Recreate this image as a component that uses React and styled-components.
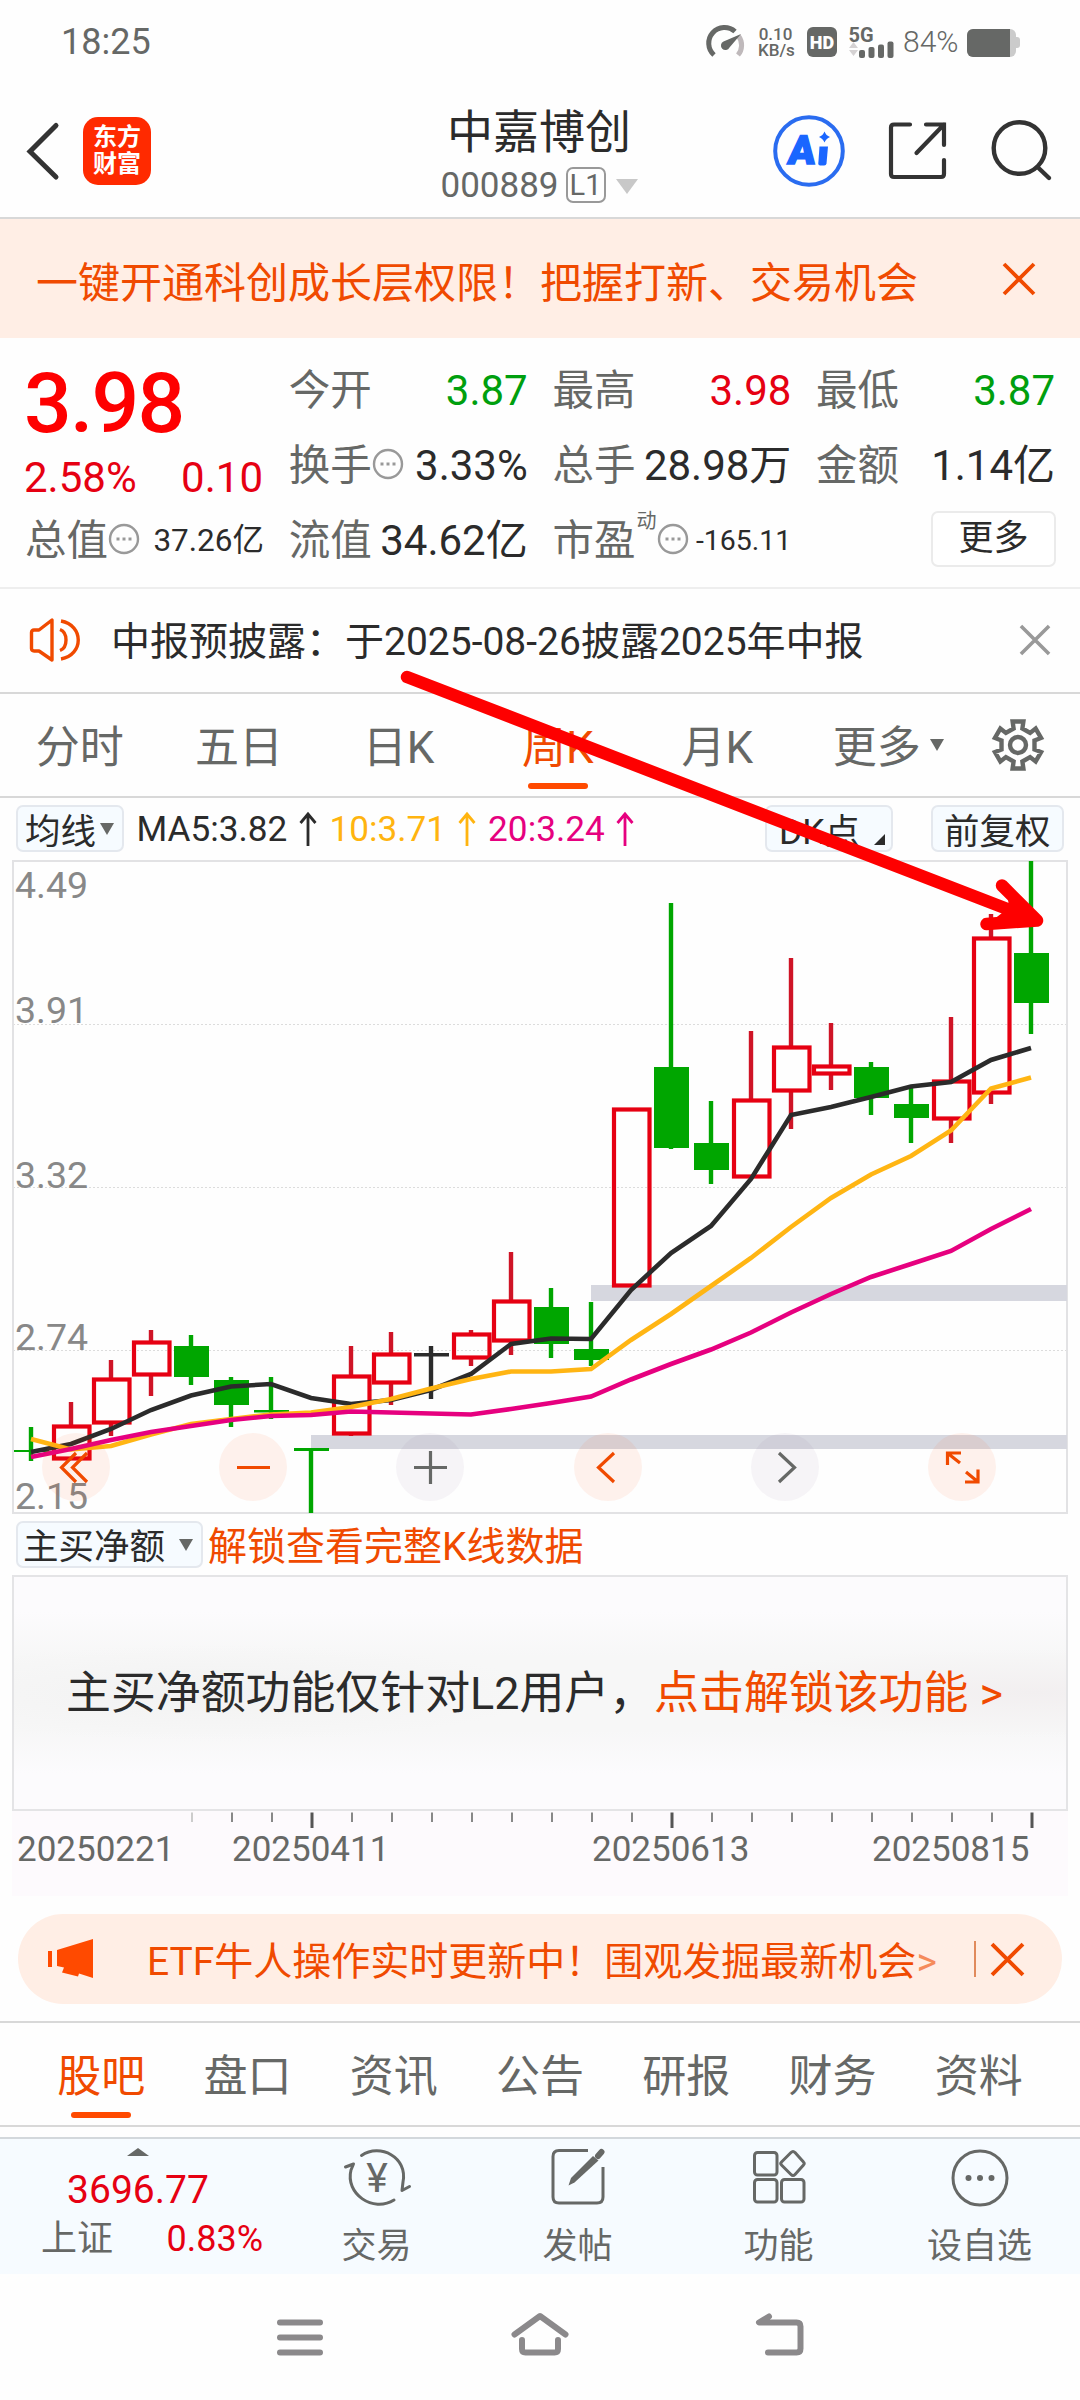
import React from 'react';
import styled, { createGlobalStyle } from 'styled-components';

const RED = '#e60012';
const GREEN = '#00a600';
const ORANGE = '#f04a00';
const GREY = '#666866';
const DARK = '#2b2b2b';

const GlobalStyle = createGlobalStyle`
  * {
    box-sizing: border-box;
  }

  body {
    margin: 0;
    background: #fefefe;
    color: ${DARK};
    font-family: Roboto, 'Noto Sans CJK SC', sans-serif;
    font-weight: 400;
  }

  svg {
    display: block;
    flex: none;
    overflow: visible;
  }
`;

const Page = styled.div`
  position: relative;
  width: 1080px;
  height: 2400px;
  overflow: hidden;
  display: flex;
  flex-direction: column;
  white-space: nowrap;
`;

/* status bar */

const StatusBar = styled.div`
  height: 84px;
  padding: 0 59px 0 61px;
  display: flex;
  align-items: center;
  color: ${GREY};
`;

const Clock = styled.div`
  flex: 1;
  font-size: 36px;
`;

const NetSpeed = styled.div`
  width: 35px;
  margin: 0 14px;
  font-size: 17px;
  font-weight: 500;
  line-height: 16px;
  text-align: center;
`;

const HdBadge = styled.div`
  width: 30px;
  height: 30px;
  margin-right: 12px;
  border-radius: 6px;
  background: ${GREY};
  color: #fff;
  font-size: 18px;
  font-weight: 900;
  line-height: 31px;
  text-align: center;
`;

const BatteryText = styled.div`
  width: 56px;
  margin: 0 8px 0 9px;
  font-size: 30px;
  font-weight: 300;
`;

/* header */

const Header = styled.div`
  height: 135px;
  padding: 2px 29px 0 26px;
  display: grid;
  grid-template-columns: 279px 1fr 278px;
  align-items: center;
  border-bottom: 2px solid #d8d8d8;
`;

const HeaderLeft = styled.div`
  display: flex;
  align-items: center;
  gap: 23px;
`;

const HeaderRight = styled.div`
  display: flex;
  align-items: center;
  justify-content: flex-end;
  gap: 44px;
`;

const Logo = styled.div`
  width: 68px;
  height: 68px;
  padding-top: 7px;
  border-radius: 15px;
  background: #ff2a00;
  color: #fff;
  font-size: 24px;
  font-weight: 700;
  line-height: 27px;
  text-align: center;
`;

const HeaderTitle = styled.div`
  padding-top: 15px;
  text-align: center;
`;

const StockName = styled.div`
  font-size: 46px;
  line-height: 53px;
`;

const StockCode = styled.div`
  display: flex;
  align-items: center;
  justify-content: center;
  color: ${GREY};
  font-size: 35px;
  line-height: 53px;
`;

const LevelTag = styled.span`
  width: 40px;
  height: 36px;
  margin: 0 10px 0 7px;
  border: 2px solid #999;
  border-radius: 7px;
  font-size: 29px;
  line-height: 33px;
  text-align: center;
`;

const Caret = styled.span`
  flex: none;
  margin-top: 2px;
  border: ${p => p.$w / 2}px solid transparent;
  border-bottom-width: 0;
  border-top: ${p => p.$h}px solid ${p => p.color || GREY};
`;

const PromoBanner = styled.div`
  height: 119px;
  padding: 2px 45px 0 36px;
  display: flex;
  align-items: center;
  justify-content: space-between;
  background: #ffeee5;
  color: ${ORANGE};
  font-size: 42px;
`;

/* quote */

const Quote = styled.div`
  height: 251px;
  padding: 15px 24px 0 25px;
  display: grid;
  grid-template-columns: repeat(4, 239px);
  grid-template-rows: repeat(3, 75px);
  column-gap: 24.7px;
  border-bottom: 2px solid #eee;
`;

const PriceBlock = styled.div`
  grid-row: span 2;
  color: ${RED};
`;

const Price = styled.div`
  height: 100px;
  margin-left: -1px;
  color: #fe0000;
  font-size: 84px;
  font-weight: 500;
  letter-spacing: -1.8px;
  line-height: 101px;
`;

const PriceChange = styled.div`
  display: flex;
  justify-content: space-between;
  margin: 0 1px 0 -1px;
  font-size: 42px;
  line-height: 50px;
`;

const Cell = styled.div`
  display: flex;
  align-items: center;
  height: 75px;
  line-height: 75px;
`;

const CellLabel = styled.span`
  color: ${GREY};
  font-size: 41.5px;
`;

const CellValue = styled.span`
  margin-left: auto;
  color: ${p => p.color || DARK};
  font-size: ${p => p.$size || 42}px;
`;

const Sup = styled.span`
  align-self: flex-start;
  margin: 2px 0 0 1px;
  width: 21px;
  color: ${GREY};
  font-size: 20px;
  line-height: 32px;
`;

const MoreButton = styled.button`
  width: 125px;
  height: 56px;
  margin: -3px -1px 0 auto;
  padding: 0;
  border: 2px solid #ebebeb;
  border-radius: 7px;
  background: #fff;
  color: ${DARK};
  font: inherit;
  font-size: 35px;
  line-height: 50px;
`;

const Notice = styled.div`
  height: 105px;
  padding: 0 30px 0 29px;
  display: flex;
  align-items: center;
  border-bottom: 2px solid #d8d8d8;
  font-size: 39px;
`;

const NoticeText = styled.div`
  flex: 1;
  margin-left: 30px;
  padding-bottom: 4px;
`;

/* period tabs */

const PeriodTabs = styled.div`
  height: 104px;
  display: flex;
  border-bottom: 2px solid #d8d8d8;
`;

const PeriodTab = styled.div`
  position: relative;
  width: 159.4px;
  padding-bottom: 2px;
  display: flex;
  align-items: center;
  justify-content: center;
  color: ${p => (p.$active ? ORANGE : GREY)};
  font-size: 44px;

  &::after {
    content: '';
    display: ${p => (p.$active ? 'block' : 'none')};
    position: absolute;
    bottom: 7px;
    width: 60px;
    height: 6px;
    border-radius: 3px;
    background: #ff4a00;
  }
`;

// the caret hangs outside so the label itself stays centered
const TabCaret = styled(Caret)`
  margin: 2px -23px 0 9px;
`;

const SettingsCell = styled.div`
  flex: 1;
  display: flex;
  align-items: center;
  justify-content: center;
`;

/* indicator rows */

const IndicatorRow = styled.div`
  height: 62px;
  padding: 0 16px;
  display: flex;
  align-items: center;
  font-size: 35.2px;
`;

const Chip = styled.div`
  position: relative;
  width: ${p => p.$w}px;
  height: 47px;
  padding: 0 0 1px ${p => p.$pad || 7}px;
  display: flex;
  align-items: center;
  gap: ${p => p.$gap || 4}px;
  border: 2px solid #e4e8ee;
  border-radius: 7px;
  background: #f6fbff;
  font-size: 35.5px;
`;

const ChipCorner = styled.span`
  position: absolute;
  right: 6px;
  bottom: 5px;
  border-left: 11px solid transparent;
  border-bottom: 11px solid ${DARK};
`;

const MaValue = styled.div`
  display: flex;
  align-items: center;
  gap: 11.5px;
  margin-left: 12.5px;
  color: ${p => p.color};
`;

const ChipGroup = styled.div`
  margin-left: auto;
  display: flex;
  gap: 38px;
`;

const ChartArea = styled.div`
  position: relative;
  height: 654px;
  padding-left: 12px;
`;

const ChartControls = styled.div`
  position: absolute;
  left: 42px;
  right: 84px;
  bottom: 13px;
  display: flex;
  justify-content: space-between;
`;

const RoundButton = styled.div`
  width: 68px;
  height: 68px;
  border-radius: 50%;
  background: ${p => (p.$muted ? 'rgba(120, 80, 140, 0.06)' : 'rgba(255, 80, 20, 0.075)')};
`;

const UnlockHint = styled.div`
  margin-left: 5px;
  padding-bottom: 3px;
  color: ${ORANGE};
  font-size: 39px;
`;

const LockedPanel = styled.div`
  height: 236px;
  margin: 0 12px;
  padding: 0 0 7px 52px;
  display: flex;
  align-items: center;
  border: 2px solid #e4e4e6;
  background:
    radial-gradient(ellipse 330px 48px at 19% 50%, #f2f2f2, rgba(246, 246, 246, 0)),
    radial-gradient(ellipse 330px 44px at 97% 50%, #f2eff0, rgba(246, 246, 246, 0)),
    linear-gradient(#fcfbfd 15%, #f7f7f7 34%, #f7f7f7 66%, #fcfbfd 85%);
  font-size: 44.9px;
`;

const UnlockLink = styled.span`
  color: ${ORANGE};
`;

const TimeAxis = styled.div`
  height: 85px;
  margin: 0 12px;
  background: #fdfafd;
`;

const Dates = styled.div`
  display: flex;
  padding-left: 5px;
  color: ${GREY};
  font-size: 35px;
  line-height: 38px;
`;

const DateLabel = styled.span`
  width: ${p => p.$w}px;
`;

/* pill */

const PromoPill = styled.div`
  height: 90px;
  margin: 18px 18px 17px;
  padding: 0 38px 0 29px;
  display: flex;
  align-items: center;
  border-radius: 45px;
  background: #ffeee5;
  color: ${ORANGE};
  font-size: 39px;
`;

const PillText = styled.div`
  flex: 1;
  margin-left: 52px;
  padding-bottom: 3px;
`;

const PillArrow = styled.span`
  opacity: 0.6;
`;

const PillDivider = styled.div`
  width: 2px;
  height: 36px;
  margin-right: 15px;
  background: #e08a5c;
`;

const ContentTabs = styled.div`
  height: 106px;
  padding: 0 28px;
  display: flex;
  border-top: 2px solid #d8d8d8;
  border-bottom: 2px solid #d8d8d8;
`;

const ContentTab = styled.div`
  position: relative;
  flex: 1;
  display: flex;
  align-items: center;
  justify-content: center;
  padding-bottom: 2px;
  color: ${p => (p.$active ? ORANGE : GREY)};
  font-size: 44px;

  &::after {
    content: '';
    display: ${p => (p.$active ? 'block' : 'none')};
    position: absolute;
    bottom: 7px;
    width: 60px;
    height: 6px;
    border-radius: 3px;
    background: #ff4a00;
  }
`;

/* bottom bar */

const BottomBar = styled.div`
  height: 137px;
  margin-top: 10px;
  display: flex;
  border-top: 2px solid #d3d8dc;
  background: #f6fbff;
`;

const IndexBox = styled.div`
  width: 276px;
  padding-top: 9px;
  display: flex;
  flex-direction: column;
  align-items: center;
  color: ${RED};
`;

const IndexValue = styled.div`
  margin-top: 10px;
  font-size: 39px;
  line-height: 49px;
`;

const IndexRow = styled.div`
  width: 100%;
  padding: 0 13px 0 41px;
  display: flex;
  justify-content: space-between;
  font-size: 36px;
  line-height: 49px;
`;

const IndexName = styled.span`
  color: ${GREY};
`;

const ToolItem = styled.div`
  flex: 1;
  padding-top: 8px;
  display: flex;
  flex-direction: column;
  align-items: center;
  color: ${GREY};
  font-size: 35px;
  line-height: 48px;

  svg {
    margin-bottom: 16px;
  }
`;

const NavBar = styled.div`
  height: 126px;
  display: flex;
  justify-content: center;
  gap: 180px;
  padding-top: 34px;
`;

const Annotation = styled.svg`
  position: absolute;
  left: 380px;
  top: 650px;
`;

const CloseIcon = ({ size = 32, color = ORANGE }) => (
  <svg width={size} height={size} viewBox="0 0 32 32" stroke={color} strokeWidth="3.8">
    <path d="M1 1L31 31M31 1L1 31" />
  </svg>
);

const DotsIcon = () => (
  <svg width="32" height="32" viewBox="0 0 32 32" fill="none" stroke="#999" strokeWidth="2.4">
    <circle cx="16" cy="15" r="14" />
    <path d="M8.5 15h3M14.5 15h3M20.5 15h3" strokeWidth="3" />
  </svg>
);

const UpArrow = () => (
  <svg width="18" height="34" viewBox="0 0 18 34" fill="none" stroke="currentColor" strokeWidth="2.8">
    <path d="M9 34V2M1.5 11L9 2l7.5 9" />
  </svg>
);

// one tooth of the gear, repeated every 60 degrees
const TOOTH = [[-4.4, -16.5], [-5.4, -23.5], [5.4, -23.5], [4.4, -16.5]];

const GearIcon = () => {
  const points = [];
  for (let k = 0; k < 6; k++) {
    const a = (k * Math.PI) / 3;
    TOOTH.forEach(([x, y]) => {
      points.push(`${x * Math.cos(a) - y * Math.sin(a)},${x * Math.sin(a) + y * Math.cos(a)}`);
    });
  }
  return (
    <svg width="54" height="54" viewBox="-27 -27 54 54" fill="none" stroke={GREY} strokeWidth="4.4">
      <polygon points={points.join(' ')} />
      <circle r="8" />
    </svg>
  );
};

const SpeakerIcon = () => (
  <svg width="52" height="44" viewBox="0 0 52 44" fill="none" stroke={ORANGE} strokeWidth="3.4">
    <path d="M2.5 14.5q0-2.5 2.5-2.5h5L23 2v40L10 33H5q-2.5 0-2.5-2.5z" strokeLinejoin="round" />
    <path d="M31 11.5c8 3 8 18 0 21M32 3c23 4 23 34 0 38" />
  </svg>
);

// x step is 40; [high, bodyTop, bodyBottom, low, kind]
const candles = [
  [1427, 1450, 1452, 1461, 'g'],
  [1402, 1425, 1460, 1460, 'r'],
  [1360, 1378, 1424, 1436, 'r'],
  [1330, 1341, 1376, 1396, 'r'],
  [1335, 1346, 1377, 1385, 'g'],
  [1377, 1380, 1405, 1427, 'g'],
  [1377, 1410, 1412.5, 1419, 'g'],
  [1448, 1448, 1451, 1513, 'g'],
  [1346, 1375, 1435, 1436, 'r'],
  [1332, 1353, 1384, 1405, 'r'],
  [1346, 1353, 1356.5, 1399, 'k'],
  [1330, 1333, 1359, 1366, 'r'],
  [1252, 1300, 1342, 1355, 'r'],
  [1288, 1307, 1344, 1358, 'g'],
  [1302, 1349, 1360, 1366, 'g'],
  [1108, 1108, 1287, 1287, 'r'],
  [903, 1067, 1148, 1149, 'g'],
  [1101, 1143, 1170, 1184, 'g'],
  [1031, 1099, 1178, 1178, 'r'],
  [958, 1046, 1092, 1129, 'r'],
  [1023, 1065, 1075, 1090, 'r'],
  [1062, 1067, 1098, 1115, 'g'],
  [1087, 1104, 1118, 1143, 'g'],
  [1017, 1080, 1120, 1143, 'r'],
  [914, 937, 1094, 1104, 'r'],
  [861, 953, 1003, 1034, 'g'],
];

const ma5 = [1452, 1444, 1429, 1410, 1395.5, 1386.5, 1384, 1398, 1404, 1400, 1390, 1374, 1344, 1338.5, 1339, 1290, 1253, 1226, 1179, 1115, 1107, 1097, 1086.5, 1082, 1060, 1048];
const ma10 = [1439, 1449.5, 1446, 1434.5, 1424, 1419, 1414.5, 1412.5, 1407, 1399, 1388.5, 1379, 1371.5, 1371.5, 1369, 1340, 1314, 1286, 1258, 1227, 1198, 1174.5, 1156, 1130.5, 1088.5, 1077.5];
const ma20 = [1457, 1449, 1440, 1432, 1426, 1420, 1416, 1415, 1411.5, 1412.5, 1413.5, 1414.5, 1409, 1403, 1396.5, 1379.5, 1364, 1349.5, 1332.5, 1312.5, 1294, 1277, 1264, 1251, 1229, 1209];

const toPoints = list => list.map((y, i) => `${31 + i * 40},${y}`).join(' ');

const Candle = ({ x, data }) => {
  const [high, top, bottom, low, kind] = data;
  if (kind === 'r') {
    return (
      <g stroke={RED} strokeWidth="4.4" fill="none">
        <path d={`M${x} ${high}V${top}M${x} ${bottom}V${low}`} stroke="#cf1426" />
        <rect x={x - 17} y={top + 1.5} width="35.5" height={bottom - top - 3} strokeWidth="4.2" />
      </g>
    );
  }
  const color = kind === 'g' ? GREEN : DARK;
  return (
    <g fill={color}>
      <rect x={x - 2.2} y={high} width="4.4" height={low - high} />
      <rect x={x - 17} y={top} width="35" height={bottom - top} />
    </g>
  );
};

const axisLabels = [[898, '4.49'], [1023, '3.91'], [1187.5, '3.32'], [1350, '2.74'], [1509, '2.15']];

const CandleChart = () => (
  <svg width="1056" height="654" viewBox="12 860 1056 654">
    <g stroke="#dcdcdc" strokeWidth="1.2" strokeDasharray="2 2">
      <path d="M13 1024.5H1067M13 1187.5H1067M13 1350.5H1067" />
    </g>
    <rect x="13" y="861" width="1054" height="652" fill="none" stroke="#e2e2e4" strokeWidth="2" />
    <g fill="#888" fontSize="37.5">
      {axisLabels.map(([y, t]) => (
        <text key={t} x="15" y={y}>{t}</text>
      ))}
    </g>
    <rect x="591" y="1285" width="476" height="16" fill="#d6d7df" />
    <rect x="311" y="1435" width="756" height="14" fill="#d6d7df" />
    {candles.map((c, i) => (
      <Candle key={i} x={31 + i * 40} data={c} />
    ))}
    <g fill="none" strokeWidth="4.6">
      <polyline points={toPoints(ma5)} stroke={DARK} />
      <polyline points={toPoints(ma10)} stroke="#ffb513" />
      <polyline points={toPoints(ma20)} stroke="#e6007f" />
    </g>
  </svg>
);

const controls = [
  { d: 'M34 20L19.5 34.5L34 49M45 20L30.5 34.5L45 49' },
  { d: 'M18 34.5H51' },
  { d: 'M18 34.5H51M34.5 18V51', muted: true },
  { d: 'M40 20L24.5 34.5L40 49' },
  { d: 'M28 20L43.5 34.5L28 49', muted: true },
  { d: 'M33 20H19.5V32M20 20.5L32 30M37 49H50V36.5M49.5 48.5L38 39' },
];

const Ticks = () => (
  <svg width="1056" height="20" viewBox="12 1812 1056 20">
    {Array.from({ length: 22 }, (_, i) => {
      const x = 192 + i * 40;
      const tall = i % 9 === 3;
      return (
        <path
          key={x}
          d={`M${x} 1813.5V${tall ? 1829 : 1823}`}
          stroke={i === 0 ? '#ccc' : tall ? '#555' : '#888'}
          strokeWidth={tall ? 3 : 2}
        />
      );
    })}
  </svg>
);

const App = () => (
  <>
    <GlobalStyle />
    <Page>
      <StatusBar>
        <Clock>18:25</Clock>
        <svg width="36" height="31" viewBox="0 0 36 31" fill="none">
          <path d="M6 29A15.2 15.2 0 0 1 27 5.5" stroke={GREY} strokeWidth="5" />
          <path d="M30.5 10A15.2 15.2 0 0 1 30 29" stroke="#bfb9bb" strokeWidth="5" />
          <path d="M33 8L21.5 21.5a4.5 4.5 0 1 1-6-6z" fill={GREY} />
        </svg>
        <NetSpeed>0.10<br />KB/s</NetSpeed>
        <HdBadge>HD</HdBadge>
        <svg width="45" height="36" viewBox="0 -4 45 36" fill={GREY}>
          <text x="-0.5" y="13.5" fontSize="20" fontWeight="700">5G</text>
          <path d="M0 20l4.500-6 4.500 6zM0 22l4.500 6L9 22z" fill="#d5d2d3" />
          <rect x="10" y="22" width="6" height="8" rx="2" />
          <rect x="19.5" y="19" width="6" height="11" rx="2" />
          <rect x="29" y="16.5" width="6" height="13.5" rx="2" />
          <rect x="38.500" y="13.5" width="6" height="16.5" rx="2" />
        </svg>
        <BatteryText>84%</BatteryText>
        <svg width="54" height="28" viewBox="0 -1 54 28">
          <rect width="49" height="28" rx="6" fill="#cbcbcb" />
          <rect x="46" y="8" width="7" height="11" rx="3" fill="#cbcbcb" />
          <path d="M6 0H43V28H6a6 6 0 0 1-6-6V6a6 6 0 0 1 6-6z" fill={GREY} />
        </svg>
      </StatusBar>

      <Header>
        <HeaderLeft>
          <svg width="34" height="58" viewBox="0 0 34 58" fill="none" stroke="#333" strokeWidth="5" strokeLinecap="round">
            <path d="M30 3.5L4 29.5L30 55" />
          </svg>
          <Logo>东方<br />财富</Logo>
        </HeaderLeft>
        <HeaderTitle>
          <StockName>中嘉博创</StockName>
          <StockCode>
            000889
            <LevelTag>L1</LevelTag>
            <Caret $w={22} $h={15} color="#c8c8c8" />
          </StockCode>
        </HeaderTitle>
        <HeaderRight>
          <svg width="72" height="72" viewBox="0 0 72 72" fill="#1a66ff">
            <circle cx="36" cy="36" r="33.8" fill="none" stroke="#2a6cf0" strokeWidth="4" />
            <text transform="translate(14 49) skewX(-6)" fontSize="40" fontWeight="900" stroke="#1a66ff" strokeWidth="1.5">A</text>
            <path d="M46.5 31.5h8.500l-1.500 17q-.3 2-2.300 2h-4q-2 0-1.900-2z" />
            <path d="M51.5 16.5q1.5 4 5.500 5.500-4 1.500-5.500 5.500-1.500-4-5.500-5.500 4-1.500 5.500-5.500z" />
          </svg>
          <svg width="58" height="58" viewBox="0 0 58 58" fill="none" stroke="#333" strokeWidth="4.2" strokeLinecap="round">
            <path d="M21 2.5H5q-3 0-3 3V52q0 3 3 3H52q3 0 3-3V38M37 2.5H55V23M55 2.5L27.5 31" />
          </svg>
          <svg width="60" height="60" viewBox="0 0 60 60" fill="none" stroke="#333" strokeWidth="4.4" strokeLinecap="round">
            <circle cx="28.5" cy="27" r="25.8" />
            <path d="M46.5 46L58 57" />
          </svg>
        </HeaderRight>
      </Header>

      <PromoBanner>
        一键开通科创成长层权限！把握打新、交易机会
        <CloseIcon />
      </PromoBanner>

      <Quote>
        <PriceBlock>
          <Price>3.98</Price>
          <PriceChange>
            <span>2.58%</span>
            <span>0.10</span>
          </PriceChange>
        </PriceBlock>
        <Cell>
          <CellLabel>今开</CellLabel>
          <CellValue color="#009f0e">3.87</CellValue>
        </Cell>
        <Cell>
          <CellLabel>最高</CellLabel>
          <CellValue color={RED}>3.98</CellValue>
        </Cell>
        <Cell>
          <CellLabel>最低</CellLabel>
          <CellValue color="#009f0e">3.87</CellValue>
        </Cell>
        <Cell>
          <CellLabel>换手</CellLabel>
          <DotsIcon />
          <CellValue>3.33%</CellValue>
        </Cell>
        <Cell>
          <CellLabel>总手</CellLabel>
          <CellValue>28.98万</CellValue>
        </Cell>
        <Cell>
          <CellLabel>金额</CellLabel>
          <CellValue>1.14亿</CellValue>
        </Cell>
        <Cell>
          <CellLabel>总值</CellLabel>
          <DotsIcon />
          <CellValue $size={31.5}>37.26亿</CellValue>
        </Cell>
        <Cell>
          <CellLabel>流值</CellLabel>
          <CellValue>34.62亿</CellValue>
        </Cell>
        <Cell>
          <CellLabel>市盈</CellLabel>
          <Sup>动</Sup>
          <DotsIcon />
          <CellValue $size={28.5}>-165.11</CellValue>
        </Cell>
        <Cell>
          <MoreButton>更多</MoreButton>
        </Cell>
      </Quote>

      <Notice>
        <SpeakerIcon />
        <NoticeText>中报预披露：于2025-08-26披露2025年中报</NoticeText>
        <CloseIcon size={30} color="#999" />
      </Notice>

      <PeriodTabs>
        <PeriodTab>分时</PeriodTab>
        <PeriodTab>五日</PeriodTab>
        <PeriodTab>日K</PeriodTab>
        <PeriodTab $active>周K</PeriodTab>
        <PeriodTab>月K</PeriodTab>
        <PeriodTab>
          更多
          <TabCaret $w={14} $h={12} />
        </PeriodTab>
        <SettingsCell>
          <GearIcon />
        </SettingsCell>
      </PeriodTabs>

      <IndicatorRow>
        <Chip $w={108}>
          均线
          <Caret $w={15} $h={12} />
        </Chip>
        <MaValue color={DARK}>MA5:3.82 <UpArrow /></MaValue>
        <MaValue color="#ffb40f">10:3.71 <UpArrow /></MaValue>
        <MaValue color="#e6007f">20:3.24 <UpArrow /></MaValue>
        <ChipGroup>
          <Chip $w={128} $pad={12}>
            DK点
            <ChipCorner />
          </Chip>
          <Chip $w={133} $pad={11}>前复权</Chip>
        </ChipGroup>
      </IndicatorRow>

      <ChartArea>
        <CandleChart />
        <ChartControls>
          {controls.map(c => (
            <RoundButton key={c.d} $muted={c.muted}>
              <svg width="68" height="68" viewBox="0 0 68 68" fill="none" stroke={c.muted ? GREY : ORANGE} strokeWidth="3.2">
                <path d={c.d} />
              </svg>
            </RoundButton>
          ))}
        </ChartControls>
      </ChartArea>

      <IndicatorRow>
        <Chip $w={187} $pad={5} $gap={14}>
          主买净额
          <Caret $w={15} $h={12} />
        </Chip>
        <UnlockHint>解锁查看完整K线数据</UnlockHint>
      </IndicatorRow>

      <LockedPanel>
        主买净额功能仅针对L2用户，
        <UnlockLink>点击解锁该功能 &gt;</UnlockLink>
      </LockedPanel>

      <TimeAxis>
        <Ticks />
        <Dates>
          <DateLabel $w={215}>20250221</DateLabel>
          <DateLabel $w={360}>20250411</DateLabel>
          <DateLabel $w={280}>20250613</DateLabel>
          <DateLabel $w={160}>20250815</DateLabel>
        </Dates>
      </TimeAxis>

      <PromoPill>
        <svg width="48" height="42" viewBox="0 0 48 42" fill="#ff4a00">
          <rect x="1" y="13" width="4" height="16" />
          <path d="M10 12L46 1V40L32 35.5l-1 3-16-4 2-5L10 28z" />
        </svg>
        <PillText>
          ETF牛人操作实时更新中！围观发掘最新机会<PillArrow>&gt;</PillArrow>
        </PillText>
        <PillDivider />
        <CloseIcon size={33} />
      </PromoPill>

      <ContentTabs>
        {['股吧', '盘口', '资讯', '公告', '研报', '财务', '资料'].map((t, i) => (
          <ContentTab key={t} $active={i === 0}>{t}</ContentTab>
        ))}
      </ContentTabs>

      <BottomBar>
        <IndexBox>
          <svg width="22" height="8" viewBox="0 0 22 8" fill={GREY}>
            <path d="M0 8L11 0l11 8z" />
          </svg>
          <IndexValue>3696.77</IndexValue>
          <IndexRow>
            <IndexName>上证</IndexName>
            0.83%
          </IndexRow>
        </IndexBox>
        <ToolItem>
          <svg width="66" height="60" viewBox="0 0 66 60" fill="none" stroke={GREY} strokeWidth="3" strokeLinecap="round" strokeLinejoin="round">
            <path d="M17.5 8.5C36-4 64 10 59 35L58 43.5l7.500-4" />
            <path d="M50 53C29 66 1 47 7 23L9.5 17 1.5 20" />
            <text x="33" y="45" fontSize="41" textAnchor="middle" fill={GREY} stroke="none">¥</text>
          </svg>
          交易
        </ToolItem>
        <ToolItem>
          <svg width="56" height="60" viewBox="0 0 56 60" fill="none" stroke={GREY} strokeWidth="3">
            <path d="M38 3.5H9q-6 0-6 6V50q0 6 6 6H47q6 0 6-6V20" />
            <path d="M43 9L48.5 13.5L24.5 35.5L18.5 38.5L21 31z" fill={GREY} stroke="none" />
            <path d="M48 9L51.5 5" strokeWidth="6" strokeLinecap="round" />
          </svg>
          发帖
        </ToolItem>
        <ToolItem>
          <svg width="54" height="60" viewBox="0 0 54 60" fill="none" stroke={GREY} strokeWidth="3" strokeLinejoin="round">
            <rect x="2.5" y="5.5" width="22.5" height="22.5" rx="3" />
            <rect x="2.5" y="32.5" width="22.5" height="22.5" rx="3" />
            <rect x="29.5" y="32.5" width="22.5" height="22.5" rx="3" />
            <path d="M39 5.5q2-2 4 0L51.5 15q1.5 1.5 0 3L43 27.5q-2 2-4 0L29.5 18q-1.5-1.5 0-3z" />
          </svg>
          功能
        </ToolItem>
        <ToolItem>
          <svg width="60" height="60" viewBox="0 0 60 60" fill={GREY}>
            <circle cx="30" cy="31" r="27" fill="none" stroke={GREY} strokeWidth="3" />
            <circle cx="18.5" cy="31" r="3" />
            <circle cx="30" cy="31" r="3" />
            <circle cx="41.5" cy="31" r="3" />
          </svg>
          设自选
        </ToolItem>
      </BottomBar>

      <NavBar>
        <svg width="60" height="56" viewBox="0 0 60 56" stroke="#8b898b" strokeWidth="6" strokeLinecap="round">
          <path d="M10 14.5H50M10 29.5H50M10 44.5H50" />
        </svg>
        <svg width="60" height="56" viewBox="0 0 60 56" fill="none" stroke="#8b898b" strokeWidth="6" strokeLinecap="round" strokeLinejoin="round">
          <path d="M4.5 26.5L30 8L55.5 26.5M12 32V41q0 3.5 3.5 3.5H44.5q3.5 0 3.5-3.5V32" />
        </svg>
        <svg width="60" height="56" viewBox="0 0 60 56" fill="none" stroke="#8b898b" strokeWidth="6" strokeLinecap="round" strokeLinejoin="round">
          <path d="M19 8.5L9 14.5H46.5q4 0 4 4V40.5q0 4-4 4H18" />
        </svg>
      </NavBar>

      <Annotation width="680" height="300" viewBox="380 650 680 300" fill="none" stroke="#fe0000" strokeWidth="12.5" strokeLinecap="round" strokeLinejoin="round">
        <path d="M407 677L1037 920.5M1002 885.5L1037 920.5L986.5 924" />
        <path d="M1008 890L1037 920L992 922L1010 908z" fill="#fe0000" strokeWidth="2" />
      </Annotation>
    </Page>
  </>
);

export default App;
